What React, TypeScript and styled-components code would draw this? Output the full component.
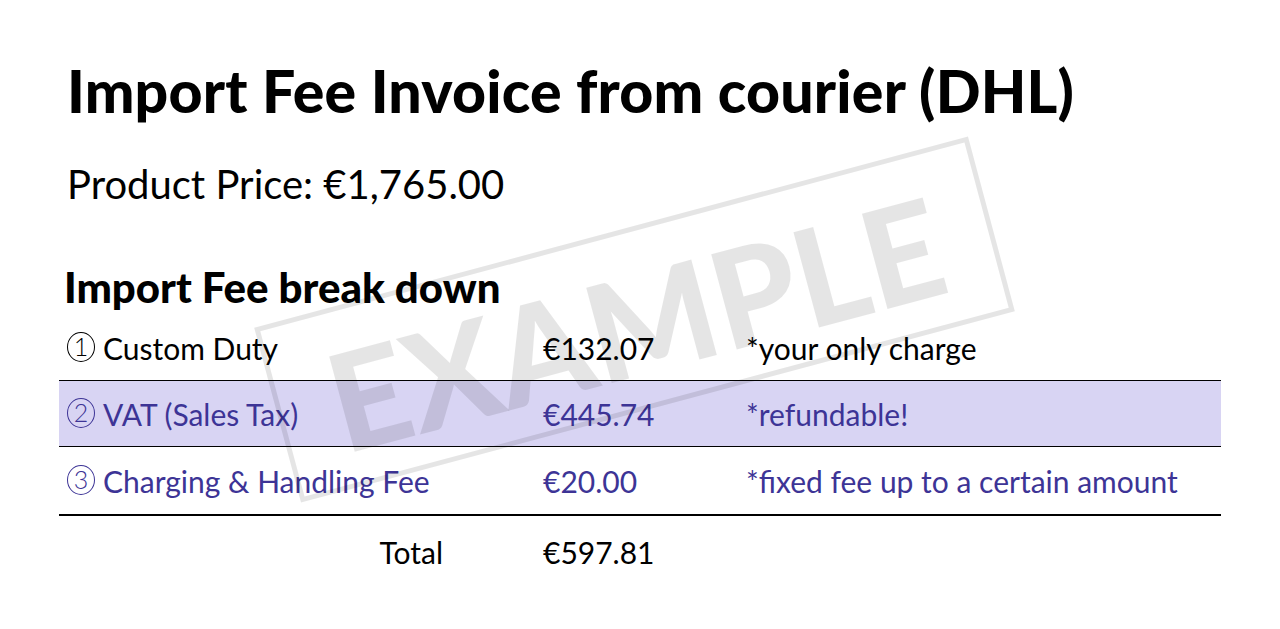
import React from 'react'
import styled, { createGlobalStyle } from 'styled-components'

const GlobalStyle = createGlobalStyle`
  html, body {
    margin: 0;
    padding: 0;
    background: #ffffff;
  }
  body {
    font-family: Lato, "Noto Sans", "Liberation Sans", sans-serif;
    color: #000000;
  }
`

const PURPLE = '#3d3496'
const LAVENDER = '#d8d4f3'

type Fee = {
  mark: string
  label: string
  amount: string
  note: string
  accent: boolean
  highlight: boolean
}

const fees: Fee[] = [
  { mark: '1', label: 'Custom Duty', amount: '€132.07', note: '*your only charge', accent: false, highlight: false },
  { mark: '2', label: 'VAT (Sales Tax)', amount: '€445.74', note: '*refundable!', accent: true, highlight: true },
  { mark: '3', label: 'Charging & Handling Fee', amount: '€20.00', note: '*fixed fee up to a certain amount', accent: true, highlight: false },
]

const App = () => {
  return (
    <>
      <GlobalStyle />
      <Page>
        <Title>Import Fee Invoice from courier (DHL)</Title>
        <Price>Product Price: €1,765.00</Price>
        <Heading>Import Fee break down</Heading>
        <Table>
          {fees.map((fee, i) => (
            <Row key={fee.label} highlight={fee.highlight} accent={fee.accent} last={i === fees.length - 1}>
              <Label>
                <Mark>{fee.mark}</Mark>
                {fee.label}
              </Label>
              <div>{fee.amount}</div>
              <div>{fee.note}</div>
            </Row>
          ))}
          <TotalRow>
            <TotalLabel>Total</TotalLabel>
            <div>€597.81</div>
            <div />
          </TotalRow>
        </Table>
        <Stamp aria-hidden="true">
          <StampText>EXAMPLE</StampText>
        </Stamp>
      </Page>
    </>
  )
}

const Page = styled.div`
  position: relative;
  width: 1280px;
  height: 629px;
  box-sizing: border-box;
  padding: 56px 59px 0 59px;
  overflow: hidden;
`

const Title = styled.h1`
  margin: 0 0 34px 8px;
  font-size: 59px;
  line-height: 70px;
  font-weight: 900;
  letter-spacing: 0.2px;
  white-space: nowrap;
`

const Price = styled.div`
  margin: 0 0 54px 8px;
  font-size: 40px;
  line-height: 48px;
  font-weight: 400;
`

const Heading = styled.h2`
  margin: 0 0 3px 5px;
  font-size: 42px;
  line-height: 50px;
  font-weight: 900;
`

const Table = styled.div`
  display: flex;
  flex-direction: column;
  width: 1162px;
`

const Row = styled.div.withConfig({
  shouldForwardProp: (p) => !['highlight', 'accent', 'last'].includes(p),
})<{ highlight: boolean; accent: boolean; last: boolean }>`
  display: grid;
  grid-template-columns: 476px 203px 1fr;
  align-items: center;
  height: ${(p) => (p.last ? '69px' : '66px')};
  padding-left: 8px;
  box-sizing: border-box;
  font-size: 30px;
  color: ${(p) => (p.accent ? PURPLE : '#000000')};
  background: ${(p) => (p.highlight ? LAVENDER : 'transparent')};
  border-bottom: ${(p) => (p.last ? '2px' : '1px')} solid #000000;
`

const Label = styled.div`
  display: flex;
  align-items: center;
  gap: 8px;
  white-space: nowrap;
`

const Mark = styled.span`
  display: inline-flex;
  align-items: center;
  justify-content: center;
  width: 26px;
  height: 28px;
  border: 1.5px solid currentColor;
  border-radius: 50%;
  font-size: 25px;
  font-weight: 300;
  line-height: 1;
  margin-top: -2px;
`

const TotalRow = styled.div`
  display: grid;
  grid-template-columns: 476px 203px 1fr;
  align-items: center;
  height: 72px;
  padding-left: 8px;
  font-size: 30px;
`

const TotalLabel = styled.div`
  text-align: right;
  padding-right: 100px;
`

const Stamp = styled.div`
  position: absolute;
  left: 265px;
  top: 229px;
  width: 739px;
  height: 181px;
  box-sizing: border-box;
  border: 5px solid rgba(0, 0, 0, 0.1);
  transform: rotate(-15deg);
  display: flex;
  align-items: center;
  justify-content: center;
  pointer-events: none;
`

const StampText = styled.span`
  font-size: 136px;
  font-weight: 900;
  line-height: 1;
  color: rgba(0, 0, 0, 0.1);
  margin-top: 6px;
`

export default App
